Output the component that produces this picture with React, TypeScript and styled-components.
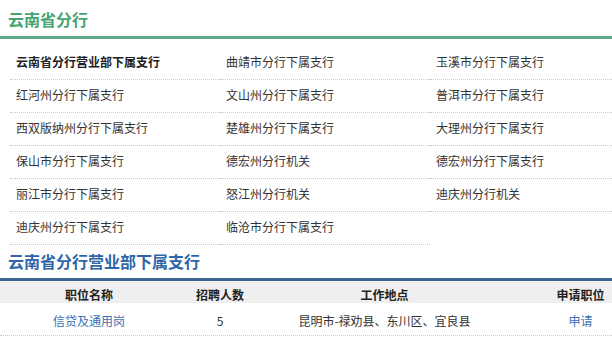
import React, { FC } from 'react';
import styled, { createGlobalStyle } from 'styled-components';

const GlobalStyle = createGlobalStyle`
	html, body {
		margin: 0;
		padding: 0;
		background: #fff;
		overflow: hidden;
	}
	body {
		font-family: "Noto Sans CJK SC", "Microsoft YaHei", sans-serif;
		font-size: 12px;
		color: #333;
	}
`;

const Page = styled.div`
	width: 612px;
	overflow: hidden;
`;

const SectionTitle = styled.div<{ $tone: 'green' | 'blue' }>`
	height: ${({ $tone }) => ($tone === 'green' ? '36px' : '33px')};
	line-height: ${({ $tone }) => ($tone === 'green' ? '38px' : '32px')};
	padding-left: 8px;
	font-size: 16px;
	font-weight: bold;
	color: ${({ $tone }) => ($tone === 'green' ? '#45a473' : '#2f66a8')};
	border-bottom: 3px solid ${({ $tone }) => ($tone === 'green' ? '#5ca98a' : '#3c6592')};
`;

const BranchGrid = styled.ul`
	display: grid;
	grid-template-columns: 210px 210px 182px;
	margin: 8px 0 0 10px;
	padding: 0;
	list-style: none;
`;

const BranchItem = styled.li<{ $bold?: boolean }>`
	height: 32px;
	line-height: 30px;
	padding-left: 6px;
	border-bottom: 1px dotted #c8c8c8;
	font-weight: ${({ $bold }) => ($bold ? 'bold' : 'normal')};
	color: ${({ $bold }) => ($bold ? '#222' : '#333')};
	white-space: nowrap;
`;

const JobTable = styled.div`
	width: 654px;
`;

const TableRow = styled.div<{ $head?: boolean }>`
	display: grid;
	grid-template-columns: 178px 84px 245px 147px;
	height: ${({ $head }) => ($head ? '22px' : '32px')};
	line-height: ${({ $head }) => ($head ? '27px' : '35px')};
	background: ${({ $head }) => ($head ? '#efefef' : '#fff')};
	font-weight: ${({ $head }) => ($head ? 'bold' : 'normal')};
	color: ${({ $head }) => ($head ? '#222' : '#333')};
	border-bottom: ${({ $head }) => ($head ? 'none' : '1px dotted #c8c8c8')};
`;

const Cell = styled.div`
	text-align: center;
	white-space: nowrap;
`;

const CellLink = styled.a`
	color: #3d6fb6;
	text-decoration: none;
	cursor: pointer;
`;

const branches = [
	'云南省分行营业部下属支行',
	'曲靖市分行下属支行',
	'玉溪市分行下属支行',
	'红河州分行下属支行',
	'文山州分行下属支行',
	'普洱市分行下属支行',
	'西双版纳州分行下属支行',
	'楚雄州分行下属支行',
	'大理州分行下属支行',
	'保山市分行下属支行',
	'德宏州分行机关',
	'德宏州分行下属支行',
	'丽江市分行下属支行',
	'怒江州分行机关',
	'迪庆州分行机关',
	'迪庆州分行下属支行',
	'临沧市分行下属支行'
];

const jobs = [{ name: '信贷及通用岗', count: 5, place: '昆明市-禄劝县、东川区、宜良县' }];

const App: FC = () => (
	<Page>
		<GlobalStyle />
		<SectionTitle $tone="green">云南省分行</SectionTitle>
		<BranchGrid>
			{branches.map((b, i) => (
				<BranchItem key={b} $bold={i === 0}>
					{b}
				</BranchItem>
			))}
		</BranchGrid>
		<SectionTitle $tone="blue">云南省分行营业部下属支行</SectionTitle>
		<JobTable>
			<TableRow $head>
				<Cell>职位名称</Cell>
				<Cell>招聘人数</Cell>
				<Cell>工作地点</Cell>
				<Cell>申请职位</Cell>
			</TableRow>
			{jobs.map((j) => (
				<TableRow key={j.name}>
					<Cell>
						<CellLink>{j.name}</CellLink>
					</Cell>
					<Cell>{j.count}</Cell>
					<Cell>{j.place}</Cell>
					<Cell>
						<CellLink>申请</CellLink>
					</Cell>
				</TableRow>
			))}
		</JobTable>
	</Page>
);

export default App;
